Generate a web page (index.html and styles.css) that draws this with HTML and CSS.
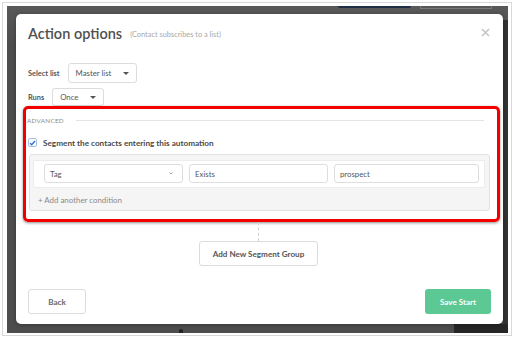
FILE: index.html
```html
<!DOCTYPE html>
<html lang="en">
<head>
	<meta charset="UTF-8">
	<title>Action options</title>
	<link rel="stylesheet" href="styles.css">
</head>
<body>
	<div class="frame">
		<div class="overlay">
			<span class="bg-btn-dark"></span>
			<span class="bg-btn-light"></span>
			<span class="bg-side"></span>
			<span class="bg-corner"></span>
			<span class="bg-pin"></span>

			<div class="modal">
				<div class="modal-header">
					<h2>Action options</h2>
					<span class="subtitle">(Contact subscribes to a list)</span>
					<span class="close">
						<svg width="9" height="9" viewBox="0 0 9 9"><path d="M1 1 L8 8 M8 1 L1 8" stroke="#c6c6c6" stroke-width="1.6"/></svg>
					</span>
				</div>

				<div class="field-row row-list">
					<label>Select list</label>
					<div class="select select-list">Master list <span class="caret"></span></div>
				</div>
				<div class="field-row row-runs">
					<label>Runs</label>
					<div class="select select-runs">Once <span class="caret"></span></div>
				</div>

				<div class="advanced">
					<div class="advanced-title">
						<span>ADVANCED</span>
						<span class="rule"></span>
					</div>
					<div class="check-row">
						<span class="checkbox">
							<svg width="7" height="6" viewBox="0 0 7 6"><path d="M1 3.2 L2.7 4.8 L6 1" fill="none" stroke="#2f6fd0" stroke-width="1.3"/></svg>
						</span>
						<span class="check-label">Segment the contacts entering this automation</span>
					</div>
					<div class="segment-panel">
						<div class="condition">
							<div class="input input-tag">Tag
								<svg class="chevron" width="4" height="3" viewBox="0 0 4 3"><path d="M0.5 0.5 L2 2 L3.5 0.5" fill="none" stroke="#888" stroke-width="0.8"/></svg>
							</div>
							<div class="input input-op">Exists</div>
							<div class="input input-value">prospect</div>
						</div>
						<div class="add-condition">+ Add another condition</div>
					</div>
				</div>

				<div class="group-area">
					<span class="connector"></span>
					<button class="btn btn-group">Add New Segment Group</button>
				</div>

				<div class="modal-footer">
					<button class="btn btn-back">Back</button>
					<button class="btn btn-save">Save Start</button>
				</div>
			</div>
		</div>
	</div>
</body>
</html>
```

FILE: styles.css
```css
body {
	margin: 0;
	padding: 2px;
	background-color: #fff;
	font-family: Lato, "Liberation Sans", sans-serif;
	color: #444;
}
.frame {
	width: 510px;
	height: 334px;
	box-sizing: border-box;
	border: 1px solid #d9d9d9;
	padding: 3px 3px 2px 4px;
}
.overlay {
	height: 100%;
	box-sizing: border-box;
	background: linear-gradient(#595959, #4d4d4d 40px);
	padding: 8px 5px 9px 9px;
	position: relative;
	overflow: hidden;
}
.bg-btn-dark {
	position: absolute;
	top: 0;
	left: 331px;
	width: 73px;
	height: 2px;
	background-color: #1e2f45;
	border-radius: 0 0 3px 3px;
}
.bg-btn-light {
	position: absolute;
	top: 0;
	left: 413px;
	width: 70px;
	height: 2px;
	border: 1px solid #7a7a7a;
	border-top: none;
}
.bg-side {
	position: absolute;
	top: 14px;
	right: 0;
	width: 5px;
	height: 312px;
	background-color: #333;
}
.bg-corner {
	position: absolute;
	bottom: 0;
	right: 0;
	width: 54px;
	height: 9px;
	background-color: #262626;
}
.bg-pin {
	position: absolute;
	bottom: 0;
	left: 172px;
	width: 4px;
	height: 4px;
	border-radius: 2px 2px 0 0;
	background-color: #222;
}

.modal {
	position: relative;
	height: 100%;
	box-sizing: border-box;
	background-color: #fff;
	border-radius: 5px;
	padding: 0 12px 10px 12px;
	box-shadow: 0 1px 4px rgba(0, 0, 0, 0.3);
	display: flex;
	flex-direction: column;
}
.modal-header {
	height: 38px;
	display: flex;
	align-items: center;
	gap: 8px;
}
h2 {
	margin: 0;
	font-size: 14.5px;
	font-weight: 600;
	color: #505050;
}
.subtitle {
	font-size: 7.4px;
	color: #a8a8a8;
	margin-top: 3px;
}
.close {
	margin-left: auto;
	margin-right: 1px;
	display: flex;
	margin-top: -2px;
}

.field-row {
	display: flex;
	align-items: center;
	gap: 8px;
}
.row-list { margin-top: 11px; }
.row-runs { margin-top: 5px; }
label {
	font-size: 7.4px;
	font-weight: 700;
	color: #555;
}
.select {
	box-sizing: border-box;
	border: 1px solid #dcdcdc;
	border-radius: 3px;
	font-size: 7.8px;
	color: #555;
	display: flex;
	align-items: center;
	padding: 0 0 0 7px;
}
.select-list { width: 69px; height: 20px; }
.select-runs { width: 52px; height: 18px; }
.caret {
	margin-left: auto;
	margin-right: 7px;
	width: 0;
	height: 0;
	border-left: 3px solid transparent;
	border-right: 3px solid transparent;
	border-top: 3px solid #555;
}

.advanced {
	margin: 0 -9px 0 -5px;
	height: 116px;
	box-sizing: border-box;
	border: 3px solid #f20000;
	border-radius: 5px;
	box-shadow: 0 1px 3px rgba(0, 0, 0, 0.45);
	padding: 6px 7px 0 1px;
}
.advanced-title {
	height: 11px;
	display: flex;
	align-items: center;
	gap: 12px;
	font-size: 6.3px;
	color: #8a8a8a;
	letter-spacing: 0.3px;
}
.rule {
	flex: 1;
	height: 1px;
	background-color: #e4e4e4;
	margin-right: 6px;
}
.check-row {
	margin-top: 11px;
	height: 11px;
	display: flex;
	align-items: center;
	gap: 6px;
	padding-left: 1px;
}
.checkbox {
	width: 9px;
	height: 9px;
	box-sizing: border-box;
	background-color: #fff;
	border: 1px solid #a9bedd;
	border-radius: 2px;
	display: flex;
	align-items: center;
	justify-content: center;
}
.check-label {
	font-size: 8.2px;
	font-weight: 700;
	color: #4a4a4a;
}
.segment-panel {
	margin: 6px 0 0 2px;
	height: 57px;
	box-sizing: border-box;
	background-color: #f5f5f5;
	border: 1px solid #e2e2e2;
	border-radius: 3px;
	padding: 5px 4px 0 3px;
}
.condition {
	height: 28px;
	box-sizing: border-box;
	background-color: #fff;
	border: 1px solid #ececec;
	border-radius: 2px;
	padding: 3px 4px 0 10px;
	display: flex;
	gap: 6px;
}
.input {
	height: 19px;
	box-sizing: border-box;
	border: 1px solid #dedede;
	border-radius: 3px;
	font-size: 7.8px;
	color: #555;
	display: flex;
	align-items: center;
	padding-left: 5px;
}
.input-tag { width: 139px; }
.input-op { width: 139px; }
.input-value { width: 145px; }
.chevron {
	margin-left: auto;
	margin-right: 9px;
}
.add-condition {
	height: 23px;
	display: flex;
	align-items: center;
	padding-left: 5px;
	font-size: 7.9px;
	color: #8a8a8a;
}

.group-area {
	display: flex;
	flex-direction: column;
	align-items: center;
}
.connector {
	height: 19px;
	border-left: 1px dashed #d2d2d2;
	margin-left: -2px;
}
.btn {
	font-family: Lato, "Liberation Sans", sans-serif;
	box-sizing: border-box;
	border-radius: 3px;
	cursor: pointer;
	font-weight: 700;
	font-size: 8.1px;
}
.btn-group {
	width: 119px;
	height: 25px;
	background-color: #fff;
	border: 1px solid #dcdcdc;
	color: #555;
	margin-left: -2px;
}
.modal-footer {
	margin-top: auto;
	display: flex;
	justify-content: space-between;
}
.btn-back {
	width: 58px;
	height: 25px;
	background-color: #fff;
	border: 1px solid #dcdcdc;
	color: #666;
}
.btn-save {
	width: 66px;
	height: 25px;
	background-color: #5cc994;
	border: none;
	color: #fff;
}
```
